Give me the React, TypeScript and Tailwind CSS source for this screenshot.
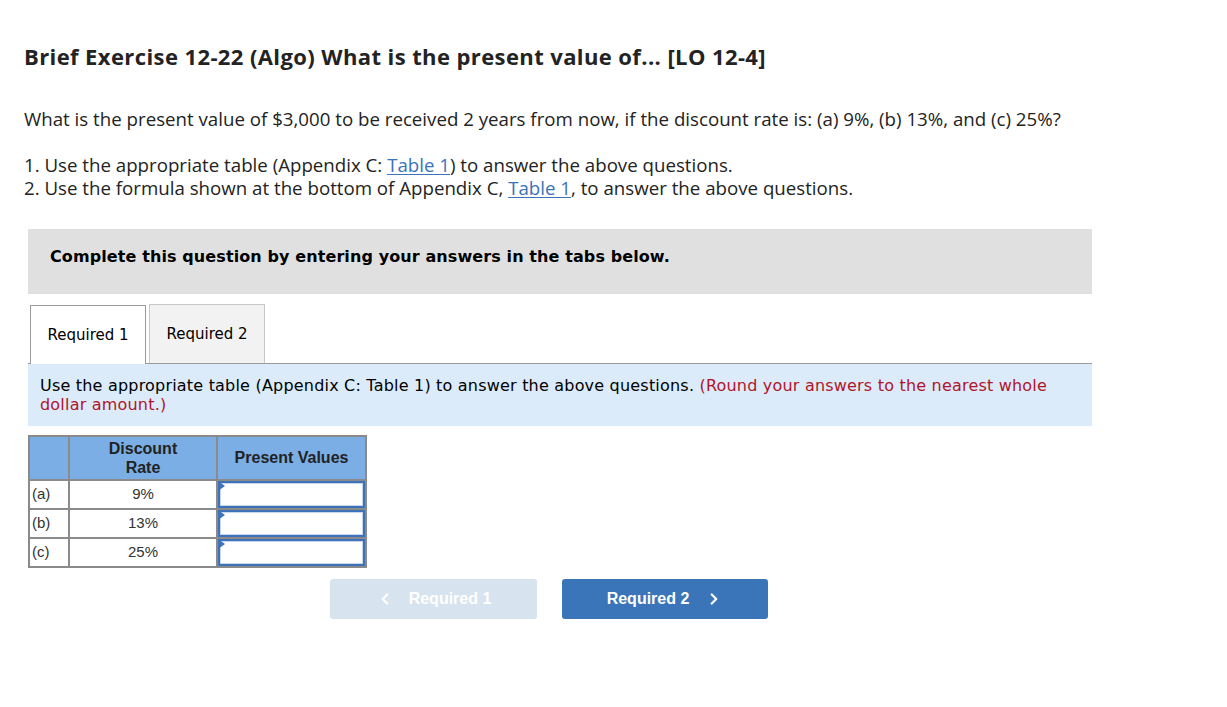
import { ChevronLeft, ChevronRight } from "lucide-react";

const rows = [
  { label: "(a)", rate: "9%" },
  { label: "(b)", rate: "13%" },
  { label: "(c)", rate: "25%" },
];

function AnswerInput() {
  return (
    <div className="relative h-full w-full border-2 border-[#3d72b8] bg-white shadow-[inset_0_0_0_1px_#c5d7ee]">
      <span className="absolute -left-[2px] -top-[2px] h-0 w-0 border-y-[5px] border-l-[7px] border-y-transparent border-l-[#3d72b8]" />
    </div>
  );
}

export default function App() {
  return (
    <div className="min-h-screen bg-white text-[#232323]">
      <div className="pl-6 pt-[41px] font-['Open_Sans',sans-serif]">
        <h1 className="text-[22px] font-bold leading-[30px] tracking-[0.4px] text-[#232323]">
          Brief Exercise 12-22 (Algo) What is the present value of... [LO 12-4]
        </h1>
        <p className="mt-[36px] text-[18.7px] leading-[23px]">
          What is the present value of $3,000 to be received 2 years from now, if the discount rate is: (a) 9%, (b) 13%, and (c) 25%?
        </p>
        <div className="mt-[23px] text-[18.7px] leading-[23px]">
          <p>
            1. Use the appropriate table (Appendix C:{" "}
            <span className="text-[#3b73b9] underline underline-offset-2">Table 1</span>) to answer the above questions.
          </p>
          <p>
            2. Use the formula shown at the bottom of Appendix C,{" "}
            <span className="text-[#3b73b9] underline underline-offset-2">Table 1</span>, to answer the above questions.
          </p>
        </div>
      </div>

      <div className="ml-[28px] mt-[30px] w-[1064px]">
        <div className="flex h-[65px] items-center bg-[#e0e0e0] pb-[9px] pl-[22px] font-['DejaVu_Sans',Verdana,sans-serif] text-[16px] font-bold tracking-[0.1px] text-black">
          Complete this question by entering your answers in the tabs below.
        </div>

        <div className="mt-[10px] flex items-end border-b border-[#9a9a9a] pl-[2px]">
          <div className="-mb-px flex h-[59px] w-[116px] items-center justify-center border border-b-0 border-[#9a9a9a] bg-white font-['DejaVu_Sans',Verdana,sans-serif] text-[15px] text-black">
            Required 1
          </div>
          <div className="ml-[3px] flex h-[59px] w-[116px] items-center justify-center border border-b-0 border-[#c8c8c8] bg-[#f2f2f2] font-['DejaVu_Sans',Verdana,sans-serif] text-[15px] text-black">
            Required 2
          </div>
        </div>

        <div className="bg-[#dbebf9] px-[12px] pb-[12px] pt-[12px] font-['DejaVu_Sans',Verdana,sans-serif] text-[16px] leading-[19px] tracking-[0.2px] text-black">
          Use the appropriate table (Appendix C: Table 1) to answer the above questions.{" "}
          <span className="text-[#b0142a]">(Round your answers to the nearest whole dollar amount.)</span>
        </div>

        <table className="mt-[9px] border-collapse font-['Liberation_Sans',Arial,sans-serif] text-[15px] text-[#333]">
          <thead>
            <tr className="h-[44px] bg-[#7aaee5]">
              <th className="w-[40px] border-2 border-[#8a8a8a]" />
              <th className="w-[148px] border-2 border-[#8a8a8a] text-[16px] font-bold leading-[19px] text-[#222]">
                Discount
                <br />
                Rate
              </th>
              <th className="w-[149px] border-2 border-[#8a8a8a] text-[16px] font-bold text-[#222]">Present Values</th>
            </tr>
          </thead>
          <tbody>
            {rows.map((r) => (
              <tr key={r.label} className="h-[29px]">
                <td className="border-2 border-[#8a8a8a] pl-[2px] text-left">{r.label}</td>
                <td className="border-2 border-[#8a8a8a] text-center">{r.rate}</td>
                <td className="h-[29px] border-2 border-[#8a8a8a] p-0">
                  <AnswerInput />
                </td>
              </tr>
            ))}
          </tbody>
        </table>

        <div className="mt-[11px] flex gap-[25px] pl-[302px] font-['Liberation_Sans',Arial,sans-serif] text-[16px] font-bold text-white">
          <button className="flex h-[40px] w-[207px] items-center justify-center gap-[15px] rounded-[3px] bg-[#d8e3f0]">
            <ChevronLeft size={18} strokeWidth={3} />
            Required 1
          </button>
          <button className="flex h-[40px] w-[206px] items-center justify-center gap-[16px] rounded-[3px] bg-[#3a75b9]">
            Required 2
            <ChevronRight size={18} strokeWidth={3} />
          </button>
        </div>
      </div>
    </div>
  );
}
